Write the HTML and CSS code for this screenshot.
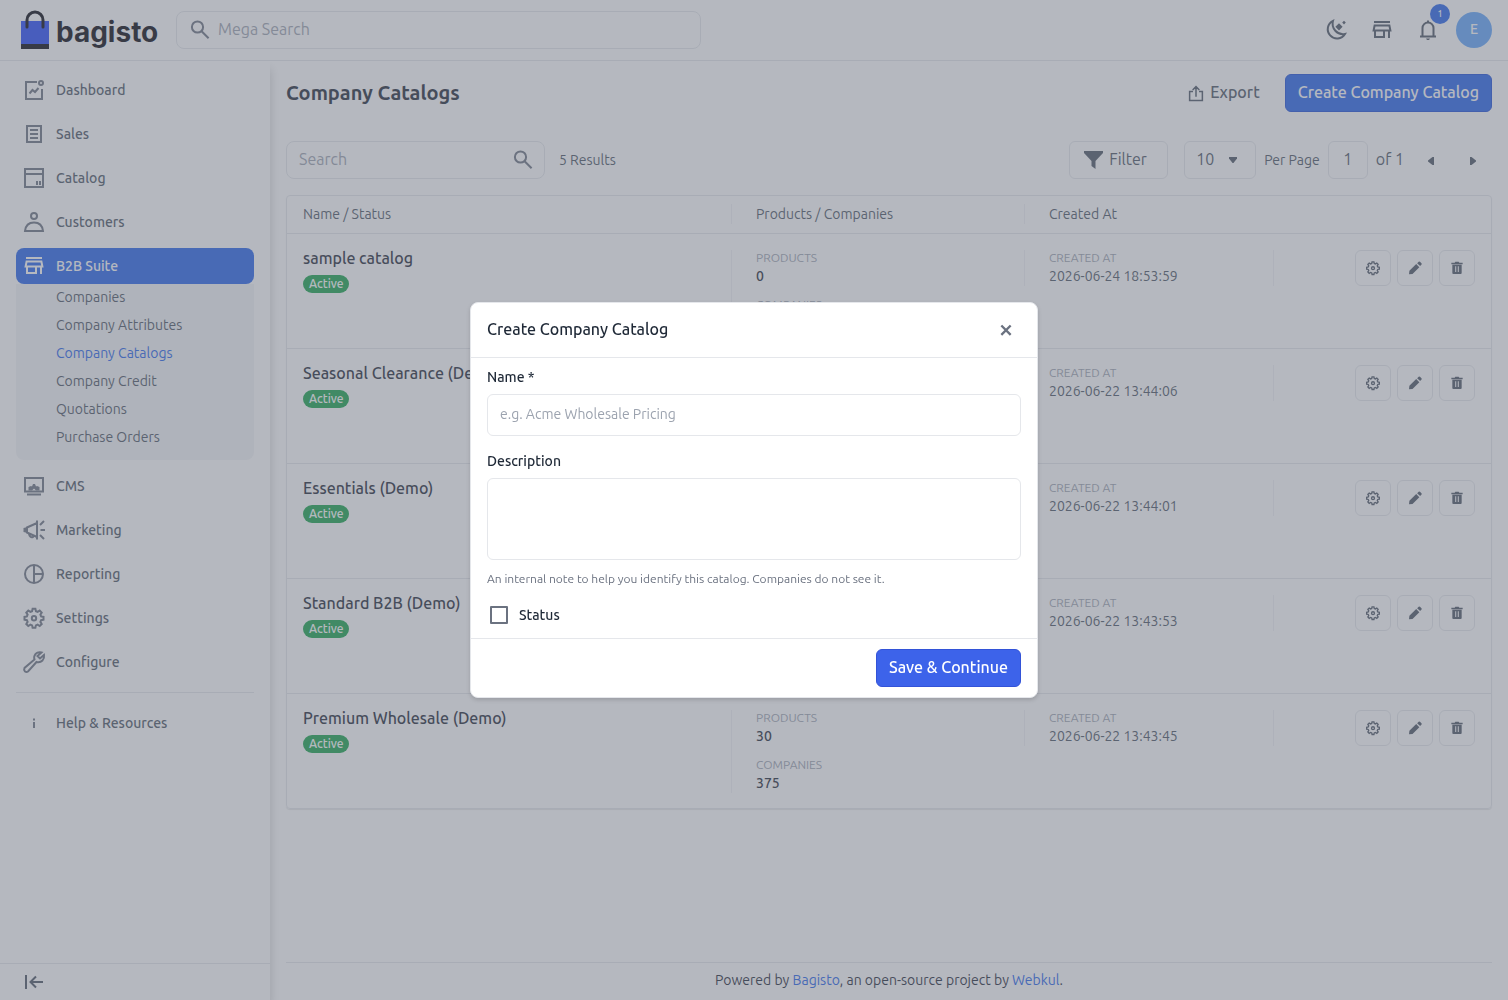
FILE: index.html
```
<!DOCTYPE html>
<html lang="en">
<head>
  <meta charset="UTF-8">
  <meta name="viewport" content="width=device-width, initial-scale=1.0">
  <title>Company Catalogs</title>
  <link rel="stylesheet" href="styles.css">
</head>
<body>
  <!-- shared icons -->
  <svg class="sprite" aria-hidden="true">
    <symbol id="i-search" viewBox="0 0 24 24"><circle cx="9.5" cy="9" r="5.6"/><path d="M13.6 13.2l7 7"/></symbol>
    <symbol id="i-store" viewBox="0 0 24 24"><path d="M4 4h16M4.6 7.5h14.8l1 5H3.600zM5 12.500V19h9v-6.500M19 12.500V20"/></symbol>
    <symbol id="i-gear" viewBox="0 0 24 24"><path d="M10.600 2.800h2.800l.5 2.400 1.700.7 2.100-1.300 2 2-1.300 2.100.7 1.700 2.400.5v2.800l-2.400.5-.7 1.700 1.300 2.100-2 2-2.100-1.300-1.700.7-.5 2.400h-2.800l-.5-2.400-1.700-.7-2.100 1.300-2-2 1.300-2.100-.7-1.700-2.400-.5v-2.800l2.400-.5.7-1.700-1.300-2.100 2-2 2.100 1.300 1.700-.7z"/><circle cx="12" cy="12.300" r="2.200"/></symbol>
    <symbol id="i-pencil" viewBox="0 0 24 24"><path class="solid" d="M3 21.500l.6-5.300L13.800 6l4.700 4.700L8.300 20.900zM15.200 4.700L17.500 2.500q1-.8 2 .2l2.200 2.200q1 1 .1 2l-2.100 2.200z"/></symbol>
    <symbol id="i-trash" viewBox="0 0 24 24"><path class="solid" fill-rule="evenodd" d="M3.500 4h5l1-1.300h5L15.500 4h5v2.300h-17zM5 7h14v12.500q0 1.500-1.500 1.500h-11Q5 21 5 19.500zm4.300 2.500v8.500h1.500V9.500zm3.900 0v8.500h1.500V9.500z"/></symbol>
  </svg>

  <header class="topbar">
    <a href="#" class="logo">
      <svg width="30" height="40" viewBox="0 0 30 40" aria-hidden="true">
        <rect x="1" y="11" width="28" height="24" fill="#2448fa"/>
        <rect x="1" y="34" width="28" height="5" fill="#05050c"/>
        <path d="M7 17V10a8 8 0 0 1 16 0v7" fill="none" stroke="#05050c" stroke-width="3" stroke-linecap="round"/>
      </svg>
      <span>bagisto</span>
    </a>
    <label class="mega-search">
      <svg class="icon"><use href="#i-search"/></svg>
      <input type="text" placeholder="Mega Search" aria-label="Mega Search">
    </label>
    <div class="top-actions">
      <button type="button" aria-label="Dark mode">
        <svg class="icon" viewBox="0 0 24 24"><path d="M9 2.800A9.300 9.300 0 1 0 21 16A10.500 10.500 0 0 1 9 2.800z"/><path class="solid" d="M15 5.200l3.600 3.600-3.600 3.600-3.600-3.600zM20 2.800l1.800 1.800L20 6.400l-1.800-1.800z"/></svg>
      </button>
      <button type="button" aria-label="Visit shop"><svg class="icon"><use href="#i-store"/></svg></button>
      <button type="button" class="bell" aria-label="Notifications">
        <svg class="icon" viewBox="0 0 24 24"><path d="M4 18.500h16M6.500 18V10a5.500 5.500 0 0 1 11 0v8M12 2.500v2"/><path class="solid" d="M10 20.500h4l-1 1.500h-2z"/></svg>
        <span class="count">1</span>
      </button>
      <button type="button" class="avatar">E</button>
    </div>
  </header>

  <div class="layout">
    <aside class="sidebar">
      <nav class="menu">
        <a href="#"><svg class="icon" viewBox="0 0 24 24"><path d="M15 4H4v17h16V11M7.500 15.500l3-3.500 2.500 2 3.500-4"/><circle cx="19" cy="5" r="2"/></svg>Dashboard</a>
        <a href="#"><svg class="icon" viewBox="0 0 24 24"><path d="M5 4h14v16H5zM8 8h8M8 12h8M8 16h8"/></svg>Sales</a>
        <a href="#"><svg class="icon" viewBox="0 0 24 24"><path d="M3 3h18v18H3zM3 8h18M15 15v4M18 15v4"/></svg>Catalog</a>
        <a href="#"><svg class="icon" viewBox="0 0 24 24"><circle cx="12" cy="6" r="3"/><path d="M3 21q1-8.500 9-8.500T21 21z"/></svg>Customers</a>
        <div class="group">
          <a href="#" class="active"><svg class="icon"><use href="#i-store"/></svg>B2B Suite</a>
          <div class="submenu">
            <a href="#">Companies</a>
            <a href="#">Company Attributes</a>
            <a href="#" class="current">Company Catalogs</a>
            <a href="#">Company Credit</a>
            <a href="#">Quotations</a>
            <a href="#">Purchase Orders</a>
          </div>
        </div>
        <a href="#"><svg class="icon" viewBox="0 0 24 24"><path d="M3 4h18v13.500H3zM5 20.500h14"/><path class="solid" d="M6.500 16.500v-3.500l2.500-1 1 .5 1-2.500h2l1 2.500 1-.5 2.500 1v3.500h-3.500l-2-2-2 2z"/></svg>CMS</a>
        <a href="#"><svg class="icon" viewBox="0 0 24 24"><path d="M15 2.500v19M15 5L5 9.500v5L15 19M18 7l4-4M18.500 12H23M18 17l4 4M7 16q1 4 4 3l1-1.500"/><path class="solid" d="M1.500 10l4-1v6l-4-1z"/></svg>Marketing</a>
        <a href="#"><svg class="icon" viewBox="0 0 24 24"><circle cx="12" cy="12" r="9"/><path d="M12 3v18M12 12h9"/></svg>Reporting</a>
        <a href="#"><svg class="icon"><use href="#i-gear"/></svg>Settings</a>
        <a href="#"><svg class="icon" viewBox="0 0 24 24"><path d="M19.500 2.500q-3.500-1-6 1.500-2 2.500-1 5.500L2.500 18q-1 2 .5 3.500 1.500 1 3 0L14.500 12q3.500 1 6-1.500 2-2.500 1.500-5.500L18 8.500 15.500 6z"/></svg>Configure</a>
        <hr>
        <a href="#"><svg class="icon" viewBox="0 0 24 24"><path class="solid" d="M11 7.500h2v2h-2zM11 11h2v6h-2z"/></svg>Help &amp; Resources</a>
      </nav>
      <button type="button" class="collapse" aria-label="Collapse menu">
        <svg class="icon" viewBox="0 0 24 24"><path d="M4 5v14M21 12H8M14 6.500L8.500 12l5.500 5.500"/></svg>
      </button>
    </aside>

    <main class="content">
      <div class="page-head">
        <h1>Company Catalogs</h1>
        <button type="button" class="export">
          <svg class="icon" viewBox="0 0 24 24"><path d="M8 10H3.500v12h17V10H16M12 17V4M7.500 8L12 3.500 16.500 8"/></svg>
          Export
        </button>
        <button type="button" class="btn">Create Company Catalog</button>
      </div>

      <div class="toolbar">
        <label class="box search">
          <input type="text" placeholder="Search" aria-label="Search">
          <svg class="icon"><use href="#i-search"/></svg>
        </label>
        <p class="small">5 Results</p>
        <button type="button" class="box filter">
          <svg class="icon" viewBox="0 0 24 24"><path class="solid" d="M3 3h19v2L14.500 13v8l-4-3v-5L3 5z"/></svg>
          <span>Filter</span>
        </button>
        <div class="box per-page">
          <select id="per-page"><option>10</option><option>20</option><option>50</option></select>
          <svg class="arrow" viewBox="0 0 10 10"><path class="solid" d="M1 2h8v1.500L5.500 8h-1L1 3.500z"/></svg>
        </div>
        <label class="small" for="per-page">Per Page</label>
        <input type="text" class="box page-no" value="1" aria-label="Page">
        <span>of 1</span>
        <div class="pager">
          <button type="button" aria-label="Previous page"><svg class="arrow" viewBox="0 0 10 10"><path class="solid" d="M8 1v8H6.500L2 5.500v-1L6.500 1z"/></svg></button>
          <button type="button" aria-label="Next page"><svg class="arrow" viewBox="0 0 10 10"><path class="solid" d="M2 1v8h1.500L8 5.500v-1L3.500 1z"/></svg></button>
        </div>
      </div>

      <div class="table-wrap">
        <table>
          <colgroup><col><col class="col-products"><col class="col-created"><col class="col-actions"></colgroup>
          <thead>
            <tr>
              <th>Name / Status</th>
              <th><div class="cell">Products / Companies</div></th>
              <th><div class="cell">Created At</div></th>
              <th></th>
            </tr>
          </thead>
          <tbody id="rows"></tbody>
        </table>
      </div>

      <footer class="footer">
        <p>Powered by <a href="#">Bagisto</a>, an open-source project by <a href="#">Webkul</a>.</p>
      </footer>
    </main>
  </div>

  <div class="overlay">
    <form class="modal" role="dialog" aria-labelledby="modal-title">
      <div class="modal-head">
        <h2 id="modal-title">Create Company Catalog</h2>
        <button type="button" aria-label="Close"><svg viewBox="0 0 12 12"><path d="M2 3l8 8M10 3l-8 8"/></svg></button>
      </div>
      <div class="modal-body">
        <label for="name">Name *</label>
        <input type="text" id="name" placeholder="e.g. Acme Wholesale Pricing">
        <label for="description">Description</label>
        <textarea id="description"></textarea>
        <p class="hint">An internal note to help you identify this catalog. Companies do not see it.</p>
        <div class="check">
          <input type="checkbox" id="status">
          <label for="status">Status</label>
        </div>
      </div>
      <div class="modal-foot">
        <button type="submit" class="btn save">Save &amp; Continue</button>
      </div>
    </form>
  </div>

  <script src="script.js"></script>
</body>
</html>
```
FILE: styles.css
```
* {
  box-sizing: border-box;
}

body {
  margin: 0;
  height: 100vh;
  display: flex;
  flex-direction: column;
  overflow: hidden;
  font-family: Ubuntu, "Noto Sans", sans-serif;
  font-size: 16px;
  line-height: 24px;
  color: #4b5563;
  background: #fff;
}

h1, h2, p {
  margin: 0;
}

a {
  color: #2563eb;
  text-decoration: none;
}

button, input, select, textarea {
  font: inherit;
  color: inherit;
}

button {
  border: none;
  background: none;
  padding: 0;
  cursor: pointer;
}

input::placeholder {
  color: #9ca3af;
  opacity: 1;
}

.sprite {
  display: none;
}

.icon {
  width: 24px;
  height: 24px;
  flex: none;
  fill: none;
  stroke: currentColor;
  stroke-width: 2;
}

.solid {
  fill: currentColor;
  stroke: none;
}

.arrow {
  width: 10px;
  height: 10px;
  flex: none;
  color: #4b5563;
}

/* top bar */
.topbar {
  flex: none;
  display: flex;
  align-items: center;
  height: 61px;
  padding: 0 16px 0 20px;
  border-bottom: 1px solid #e5e7eb;
}

.logo {
  display: flex;
  align-items: center;
  gap: 6px;
  width: 156px;
  color: #05050c;
  font-family: Inter, sans-serif;
  font-size: 28px;
  font-weight: 700;
}

.logo span {
  padding-top: 4px;
}

.mega-search {
  display: flex;
  align-items: center;
  gap: 6px;
  width: 525px;
  height: 38px;
  padding: 0 12px 0 11px;
  border: 1px solid #e5e7eb;
  border-radius: 8px;
}

.mega-search .icon, .search .icon {
  color: #6b7280;
}

.mega-search input, .search input {
  flex: 1;
  min-width: 0;
  padding: 0 0 2px;
  border: none;
  outline: none;
  background: none;
}

.top-actions {
  display: flex;
  align-items: center;
  gap: 10px;
  margin-left: auto;
}

.top-actions button {
  display: flex;
  align-items: center;
  justify-content: center;
  width: 36px;
  height: 36px;
}

.bell {
  position: relative;
}

.count {
  position: absolute;
  top: -8px;
  right: -4px;
  width: 20px;
  border-radius: 50%;
  background: #2563eb;
  color: #fff;
  font-size: 9px;
  font-weight: 550;
  line-height: 20px;
}

.top-actions .avatar {
  padding-bottom: 2px;
  border-radius: 50%;
  background: #60a5fa;
  color: #fff;
  font-size: 14px;
  font-weight: 550;
}

/* sidebar */
.layout {
  flex: 1;
  display: flex;
  min-height: 0;
}

.sidebar {
  flex: none;
  display: flex;
  flex-direction: column;
  width: 270px;
  box-shadow: 0 8px 10px rgba(0, 0, 0, 0.2);
  clip-path: inset(0 -12px 0 0);
  font-size: 14px;
}

.menu {
  flex: 1;
  display: flex;
  flex-direction: column;
  gap: 8px;
  padding: 11px 16px;
}

.menu a {
  display: flex;
  align-items: center;
  gap: 10px;
  height: 36px;
  padding: 0 6px;
  border-radius: 8px;
  color: #4b5563;
  font-weight: 550;
}

.menu .icon {
  color: #6b7280;
}

.menu a.active, .menu .active .icon {
  background: #2563eb;
  color: #fff;
}

.submenu {
  padding-bottom: 8px;
  border-radius: 0 0 8px 8px;
  background: #f3f4f6;
}

.menu .submenu a {
  height: 28px;
  padding: 0 0 2px 40px;
  font-weight: 400;
}

.menu .submenu .current {
  color: #2563eb;
}

.menu hr {
  width: 100%;
  margin: 4px 0;
  border: none;
  border-top: 1px solid #e5e7eb;
}

.collapse {
  display: flex;
  align-items: center;
  height: 37px;
  padding: 0 22px;
  border-top: 1px solid #e5e7eb;
}

/* page */
.content {
  flex: 1;
  display: flex;
  flex-direction: column;
  min-width: 0;
  padding: 13px 16px 0;
}

.page-head {
  display: flex;
  align-items: center;
}

h1 {
  margin-right: auto;
  color: #1f2937;
  font-size: 20px;
  font-weight: 700;
}

.export {
  display: flex;
  align-items: center;
  gap: 5px;
  margin-right: 25px;
  padding-bottom: 2px;
  font-weight: 550;
}

.export .icon {
  width: 18px;
  height: 18px;
  margin-top: 2px;
}

.btn {
  height: 38px;
  padding: 0 12px 2px;
  border: 1px solid #1d4ed8;
  border-radius: 6px;
  background: #2563eb;
  color: #fff;
  font-weight: 550;
}

.toolbar {
  display: flex;
  align-items: center;
  gap: 8px;
  margin: 29px 0 16px;
}

.toolbar span {
  padding-bottom: 2px;
}

.box {
  display: flex;
  align-items: center;
  height: 38px;
  border: 1px solid #e5e7eb;
  border-radius: 6px;
}

.search {
  width: 259px;
  margin-right: 6px;
  padding: 0 9px 0 12px;
  border-radius: 8px;
}

.small {
  font-size: 14px;
}

.filter {
  gap: 4px;
  width: 99px;
  margin: 0 8px 0 auto;
  padding: 0 11px;
}

.per-page {
  position: relative;
  width: 72px;
}

.per-page select {
  width: 100%;
  height: 100%;
  padding: 0 11px 2px;
  border: none;
  background: none;
  appearance: none;
}

.per-page .arrow {
  position: absolute;
  right: 17px;
  pointer-events: none;
}

.page-no {
  width: 40px;
  padding: 0 0 2px;
  background: none;
  text-align: center;
}

.pager {
  display: flex;
  gap: 4px;
}

.pager button {
  width: 38px;
  height: 38px;
}

/* table */
.table-wrap {
  border: 1px solid #e5e7eb;
  border-radius: 4px;
  box-shadow: 0 1px 1px rgba(0, 0, 0, 0.1);
}

table {
  width: 100%;
  table-layout: fixed;
  border-collapse: collapse;
  font-size: 14px;
  line-height: 20px;
}

.col-products {
  width: 293px;
}

.col-created {
  width: 249px;
}

.col-actions {
  width: 218px;
}

th, td {
  padding: 16px 0 15px;
  text-align: left;
  vertical-align: top;
}

th {
  height: 37px;
  padding: 8px 0;
  font-weight: 400;
}

tbody tr {
  border-top: 1px solid #e5e7eb;
}

th:first-child, td:first-child {
  padding-left: 16px;
}

.cell {
  min-height: 20px;
  padding-left: 24px;
  border-left: 1px solid #f0f1f4;
}

.name {
  margin-bottom: 9px;
  color: #1f2937;
  font-size: 16px;
  font-weight: 550;
  line-height: 16px;
}

.badge {
  display: inline-block;
  padding: 0 6px;
  border-radius: 10px;
  background: #16a34a;
  color: #fff;
  font-size: 12px;
  font-weight: 550;
  line-height: 18px;
  vertical-align: top;
}

.caption {
  color: #9ca3af;
  font-size: 12px;
  line-height: 16px;
}

.value {
  color: #1f2937;
  font-weight: 500;
}

.value + .caption {
  margin-top: 11px;
}

.actions {
  display: flex;
  justify-content: flex-end;
  gap: 6px;
  padding-right: 16px;
}

.actions button {
  display: flex;
  align-items: center;
  justify-content: center;
  width: 36px;
  height: 36px;
  border: 1px solid #e5e7eb;
  border-radius: 6px;
}

.actions .icon {
  width: 16px;
  height: 16px;
}

.footer {
  margin-top: auto;
  padding: 7px 0 9px;
  border-top: 1px solid #e5e7eb;
  color: #1f2937;
  font-size: 14px;
  line-height: 21px;
  text-align: center;
}

/* modal */
.overlay {
  position: fixed;
  inset: 0;
  z-index: 10;
  display: flex;
  align-items: center;
  justify-content: center;
  background: rgba(107, 114, 128, 0.5);
}

.modal {
  width: 568px;
  max-width: 90%;
  border: 1px solid #e5e7eb;
  border-radius: 8px;
  background: #fff;
  box-shadow: 0 2px 4px rgba(0, 0, 0, 0.15);
  color: #1f2937;
}

.modal-head {
  display: flex;
  align-items: center;
  justify-content: space-between;
  height: 55px;
  padding: 0 16px;
  border-bottom: 1px solid #e5e7eb;
}

h2 {
  padding-bottom: 2px;
  font-size: 16px;
  font-weight: 550;
}

.modal-head button {
  width: 30px;
  height: 30px;
}

.modal-head svg {
  width: 14px;
  height: 14px;
  fill: none;
  stroke: #6b7280;
  stroke-width: 2;
}

.modal-body {
  padding: 9px 16px 13px;
  font-size: 14px;
  line-height: 20px;
}

.modal-body label {
  display: block;
  margin-bottom: 7px;
  font-weight: 500;
}

.modal-body input[type="text"], textarea {
  display: block;
  width: 100%;
  height: 42px;
  margin-bottom: 15px;
  padding: 0 12px 2px;
  border: 1px solid #e5e7eb;
  border-radius: 6px;
  background: #fff;
}

.modal-body textarea {
  height: 82px;
  margin-bottom: 10px;
  resize: none;
}

.hint {
  color: #6b7280;
  font-size: 12px;
  line-height: 18px;
}

.check {
  display: flex;
  align-items: center;
  gap: 11px;
  margin-top: 17px;
  padding-left: 3px;
}

.check input {
  appearance: none;
  width: 18px;
  height: 18px;
  margin: 0;
  border: 2px solid #6b7280;
  border-radius: 1px;
}

.modal-body .check label {
  margin: 0;
}

.modal-foot {
  display: flex;
  justify-content: flex-end;
  padding: 10px 16px;
  border-top: 1px solid #e5e7eb;
}

.save {
  border-color: #3353d8;
  background: #3d63ea;
}
```
FILE: script.js
```
const catalogs = [
  { name: 'sample catalog', products: 0, companies: 0, created: '2026-06-24 18:53:59' },
  { name: 'Seasonal Clearance (Demo)', products: 30, companies: 375, created: '2026-06-22 13:44:06' },
  { name: 'Essentials (Demo)', products: 30, companies: 375, created: '2026-06-22 13:44:01' },
  { name: 'Standard B2B (Demo)', products: 30, companies: 375, created: '2026-06-22 13:43:53' },
  { name: 'Premium Wholesale (Demo)', products: 30, companies: 375, created: '2026-06-22 13:43:45' }
];

const action = (icon, label) =>
  `<button type="button" aria-label="${label}"><svg class="icon"><use href="#i-${icon}"/></svg></button>`;

document.getElementById('rows').innerHTML = catalogs.map(c => `
  <tr>
    <td><div class="name">${c.name}</div><span class="badge">Active</span></td>
    <td><div class="cell">
      <div class="caption">PRODUCTS</div><div class="value">${c.products}</div>
      <div class="caption">COMPANIES</div><div class="value">${c.companies}</div>
    </div></td>
    <td><div class="cell"><div class="caption">CREATED AT</div><div>${c.created}</div></div></td>
    <td><div class="cell actions">${action('gear', 'Settings')}${action('pencil', 'Edit')}${action('trash', 'Delete')}</div></td>
  </tr>
`).join('');
```
